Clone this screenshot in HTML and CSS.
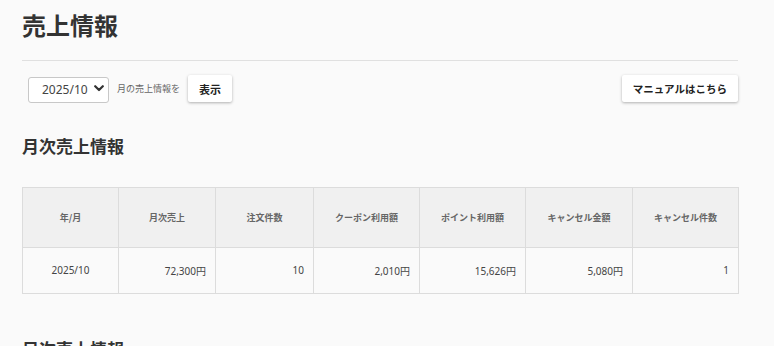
FILE: index.html
```html
<!DOCTYPE html>
<html lang="ja">
<head>
  <meta charset="UTF-8" />
  <meta name="viewport" content="width=device-width, initial-scale=1" />
  <title>売上情報</title>
  <link rel="stylesheet" href="styles.css">
</head>
<body>
  <div class="page">
    <h1 class="page-title">売上情報</h1>
    <hr class="divider" />

    <div class="toolbar">
      <div class="period">
        <div class="select-wrap">
          <select class="month-select">
            <option>2025/10</option>
          </select>
          <svg class="chevron" width="10" height="7" viewBox="0 0 10 7">
            <path d="M1.2 1.2 L5 5 L8.8 1.2" fill="none" stroke="#333" stroke-width="2.2" stroke-linecap="round" stroke-linejoin="round"/>
          </svg>
        </div>
        <span class="period-label">月の売上情報を</span>
        <button class="btn">表示</button>
      </div>
      <button class="btn btn-manual">マニュアルはこちら</button>
    </div>

    <!-- 月次 -->
    <h2 class="section-title">月次売上情報</h2>
    <table class="sales-table">
      <colgroup>
        <col style="width:96px">
        <col style="width:97px">
        <col style="width:98px">
        <col style="width:106px">
        <col style="width:106px">
        <col style="width:107px">
        <col style="width:106px">
      </colgroup>
      <thead>
        <tr>
          <th>年/月</th>
          <th>月次売上</th>
          <th>注文件数</th>
          <th>クーポン利用額</th>
          <th>ポイント利用額</th>
          <th>キャンセル金額</th>
          <th>キャンセル件数</th>
        </tr>
      </thead>
      <tbody>
        <tr>
          <td class="center">2025/10</td>
          <td>72,300円</td>
          <td>10</td>
          <td>2,010円</td>
          <td>15,626円</td>
          <td>5,080円</td>
          <td>1</td>
        </tr>
      </tbody>
    </table>

    <!-- 日次 -->
    <h2 class="section-title daily">日次売上情報</h2>
  </div>
</body>
</html>
```

FILE: styles.css
```css
* {
  box-sizing: border-box;
}

html, body {
  margin: 0;
  padding: 0;
  height: 100%;
  overflow: hidden;
}

body {
  background: #fafafa;
  color: #333;
  font-family: "Noto Sans CJK JP", "Noto Sans", sans-serif;
}

.page {
  padding: 0 36px 0 22px;
}

.page-title {
  font-size: 24px;
  line-height: 1;
  font-weight: bold;
  margin: 13px 0 0;
  color: #333;
}

.divider {
  border: 0;
  border-top: 1px solid #e0e0e0;
  margin: 23px 0 0;
}

.toolbar {
  display: flex;
  justify-content: space-between;
  align-items: center;
  margin-top: 14px;
}

.period {
  display: flex;
  align-items: center;
  gap: 8px;
  padding-left: 6px;
}

.select-wrap {
  position: relative;
}

.month-select {
  appearance: none;
  -webkit-appearance: none;
  width: 81px;
  height: 26px;
  border: 1px solid #c8c8c8;
  border-radius: 3px;
  background: #fff;
  color: #444;
  font-family: "Noto Sans", sans-serif;
  font-size: 12px;
  padding: 0 0 0 13px;
}

.chevron {
  position: absolute;
  right: 5px;
  top: 10px;
  pointer-events: none;
}

.period-label {
  font-size: 9px;
  color: #666;
}

.btn {
  background: #fff;
  border: 0;
  border-radius: 2px;
  height: 27px;
  padding: 0 11px;
  font-family: "Noto Sans CJK JP", sans-serif;
  font-size: 11px;
  font-weight: bold;
  color: #222;
  box-shadow: 0 1px 3px rgba(0, 0, 0, 0.3);
  cursor: pointer;
}

.btn-manual {
  font-size: 10.5px;
  padding: 0 11px;
}

.section-title {
  font-size: 17px;
  line-height: 1;
  font-weight: bold;
  margin: 34px 0 0;
  color: #333;
}

.sales-table {
  border-collapse: collapse;
  table-layout: fixed;
  width: 716px;
  margin-top: 33px;
  font-family: "Noto Sans", "Noto Sans CJK JP", sans-serif;
}

.sales-table th,
.sales-table td {
  border: 1px solid #dcdcdc;
}

.sales-table th {
  background: #f0f0f0;
  height: 60px;
  font-family: "Noto Sans CJK JP", sans-serif;
  font-size: 9px;
  font-weight: bold;
  color: #666;
  text-align: center;
}

.sales-table td {
  height: 46px;
  font-size: 10px;
  color: #444;
  text-align: right;
  padding: 0 9px;
}

.sales-table td.center {
  text-align: center;
}

.daily {
  margin-top: 46px;
}
```
